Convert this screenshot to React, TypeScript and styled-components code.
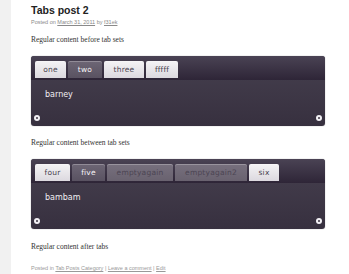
import React from "react";
import styled, { createGlobalStyle } from "styled-components";

const Global = createGlobalStyle`
  html, body { margin: 0; padding: 0; background: #f1f1f1; }
  body { font-family: "Liberation Serif", serif; }
`;

const Page = styled.div`
  margin-left: 11px;
  background: #ffffff;
  min-height: 274px;
  padding: 4px 24px 0 20px;
  box-sizing: border-box;
`;

const Title = styled.h1`
  margin: 0;
  font-family: "Liberation Sans", Arial, sans-serif;
  font-weight: bold;
  font-size: 10.5px;
  line-height: 12px;
  color: #222;
`;

const Meta = styled.div`
  margin-top: 2px;
  font-family: "Liberation Sans", Arial, sans-serif;
  font-size: 5.5px;
  line-height: 8px;
  color: #8a8a8a;
  a { color: #8a8a8a; text-decoration: underline; }
`;

const Para = styled.p<{ $top: number }>`
  margin: 0;
  font-family: "Liberation Serif", serif;
  font-size: 7.5px;
  line-height: 10px;
  color: #333;
  padding-top: ${(p) => p.$top}px;
`;

const Box = styled.div<{ $top: number }>`
  margin-top: ${(p) => p.$top}px;
  width: 294px;
  height: 70px;
  border-radius: 3px;
  background: linear-gradient(#46404f, #37303f);
  box-shadow: 0 0 1px rgba(0,0,0,0.5);
  display: flex;
  flex-direction: column;
  overflow: hidden;
`;

const TabBar = styled.div`
  height: 24px;
  box-sizing: border-box;
  padding: 5px 4px 0 4px;
  background: linear-gradient(#4a4354, #2e2537);
  display: flex;
  gap: 2px;
  align-items: flex-start;
`;

type Kind = "light" | "dark" | "disabled";

const Tab = styled.div<{ $kind: Kind; $w: number }>`
  width: ${(p) => p.$w}px;
  height: 17px;
  box-sizing: border-box;
  border-radius: 2px 2px 0 0;
  display: flex;
  align-items: center;
  justify-content: center;
  font-family: "DejaVu Sans", sans-serif;
  font-size: 7.5px;
  letter-spacing: 0.2px;
  background: ${(p) =>
    p.$kind === "light"
      ? "linear-gradient(#f4f3f5, #dcd9df)"
      : p.$kind === "dark"
      ? "linear-gradient(#6d6675, #595261)"
      : "linear-gradient(#77707e, #69626f)"};
  color: ${(p) =>
    p.$kind === "light" ? "#4a4450" : p.$kind === "dark" ? "#f4f2f6" : "#4c4553"};
  box-shadow: inset 0 1px 0 rgba(255,255,255,0.25);
`;

const Content = styled.div`
  flex: 1;
  position: relative;
  padding: 10px 14px 0 14px;
  font-family: "DejaVu Sans", sans-serif;
  font-size: 8px;
  color: #f0eef2;
`;

const Arrow = styled.span<{ $side: "left" | "right" }>`
  position: absolute;
  bottom: 5px;
  ${(p) => (p.$side === "left" ? "left: 3px;" : "right: 3px;")}
  width: 6px;
  height: 6px;
  border-radius: 50%;
  background: #f2f0f4;
  display: flex;
  align-items: center;
  justify-content: center;
  &::after {
    content: "";
    width: 2px;
    height: 2px;
    border-radius: 50%;
    background: #3a3342;
  }
`;

const Footer = styled.div`
  margin-top: 12px;
  font-family: "Liberation Sans", Arial, sans-serif;
  font-size: 5.5px;
  line-height: 8px;
  color: #999;
  a { color: #999; text-decoration: underline; }
`;

type TabDef = { label: string; kind: Kind; w: number };

const TabSet: React.FC<{ tabs: TabDef[]; body: string; top: number }> = ({ tabs, body, top }) => (
  <Box $top={top}>
    <TabBar>
      {tabs.map((t) => (
        <Tab key={t.label} $kind={t.kind} $w={t.w}>
          {t.label}
        </Tab>
      ))}
    </TabBar>
    <Content>
      {body}
      <Arrow $side="left" />
      <Arrow $side="right" />
    </Content>
  </Box>
);

export default function App() {
  return (
    <>
      <Global />
      <Page>
        <Title>Tabs post 2</Title>
        <Meta>
          Posted on <a>March 31, 2011</a> by <a>f31ek</a>
        </Meta>
        <Para $top={9}>Regular content before tab sets</Para>
        <TabSet
          top={11}
          body="barney"
          tabs={[
            { label: "one", kind: "light", w: 31 },
            { label: "two", kind: "dark", w: 34 },
            { label: "three", kind: "light", w: 40 },
            { label: "fffff", kind: "light", w: 32 },
          ]}
        />
        <Para $top={12}>Regular content between tab sets</Para>
        <TabSet
          top={11}
          body="bambam"
          tabs={[
            { label: "four", kind: "light", w: 35 },
            { label: "five", kind: "dark", w: 33 },
            { label: "emptyagain", kind: "disabled", w: 66 },
            { label: "emptyagain2", kind: "disabled", w: 72 },
            { label: "six", kind: "light", w: 30 },
          ]}
        />
        <Para $top={13}>Regular content after tabs</Para>
        <Footer>
          Posted in <a>Tab Posts Category</a> | <a>Leave a comment</a> | <a>Edit</a>
        </Footer>
      </Page>
    </>
  );
}
